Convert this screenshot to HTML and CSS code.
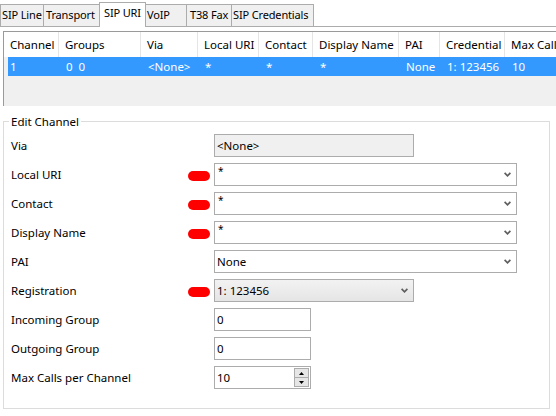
FILE: index.html
```html
<!DOCTYPE html>
<html>
<head>
<meta charset="utf-8">
<link rel="stylesheet" href="styles.css">
</head>
<body>
<div class="tabs">
  <div class="tab w-line">SIP Line</div>
  <div class="tab w-transport">Transport</div>
  <div class="tab active w-uri">SIP URI</div>
  <div class="tab w-voip">VoIP</div>
  <div class="tab w-fax">T38 Fax</div>
  <div class="tab w-cred">SIP Credentials</div>
</div>
<div class="page">
  <div class="list">
    <div class="list-head">
      <div class="hc">Channel</div>
      <div class="hc">Groups</div>
      <div class="hc">Via</div>
      <div class="hc">Local URI</div>
      <div class="hc">Contact</div>
      <div class="hc">Display Name</div>
      <div class="hc">PAI</div>
      <div class="hc">Credential</div>
      <div class="hc last">Max Calls</div>
    </div>
    <div class="list-row selected">
      <div class="rc first">1</div>
      <div class="rc">0&nbsp;&nbsp;0</div>
      <div class="rc">&lt;None&gt;</div>
      <div class="rc">*</div>
      <div class="rc">*</div>
      <div class="rc">*</div>
      <div class="rc">None</div>
      <div class="rc">1: 123456</div>
      <div class="rc">10</div>
    </div>
  </div>

  <fieldset class="group">
    <legend>Edit Channel</legend>
    <div class="row">
      <div class="label"><span>Via</span></div>
      <div class="box readonly w200">&lt;None&gt;</div>
    </div>
    <div class="row">
      <div class="label"><span>Local URI</span><span class="pill"></span></div>
      <div class="box combo w303"><span class="star">*</span><svg class="chev" width="7" height="5" viewBox="0 0 7 5"><polyline points="0.6,0.8 3.5,3.8 6.4,0.8" fill="none" stroke="#5f5f5f" stroke-width="1.7"/></svg></div>
    </div>
    <div class="row">
      <div class="label"><span>Contact</span><span class="pill"></span></div>
      <div class="box combo w303"><span class="star">*</span><svg class="chev" width="7" height="5" viewBox="0 0 7 5"><polyline points="0.6,0.8 3.5,3.8 6.4,0.8" fill="none" stroke="#5f5f5f" stroke-width="1.7"/></svg></div>
    </div>
    <div class="row">
      <div class="label"><span>Display Name</span><span class="pill"></span></div>
      <div class="box combo w303"><span class="star">*</span><svg class="chev" width="7" height="5" viewBox="0 0 7 5"><polyline points="0.6,0.8 3.5,3.8 6.4,0.8" fill="none" stroke="#5f5f5f" stroke-width="1.7"/></svg></div>
    </div>
    <div class="row">
      <div class="label"><span>PAI</span></div>
      <div class="box combo w303"><span>None</span><svg class="chev" width="7" height="5" viewBox="0 0 7 5"><polyline points="0.6,0.8 3.5,3.8 6.4,0.8" fill="none" stroke="#5f5f5f" stroke-width="1.7"/></svg></div>
    </div>
    <div class="row">
      <div class="label"><span>Registration</span><span class="pill"></span></div>
      <div class="box combo button w200"><span>1: 123456</span><svg class="chev" width="7" height="5" viewBox="0 0 7 5"><polyline points="0.6,0.8 3.5,3.8 6.4,0.8" fill="none" stroke="#5f5f5f" stroke-width="1.7"/></svg></div>
    </div>
    <div class="row">
      <div class="label"><span>Incoming Group</span></div>
      <div class="box w97">0</div>
    </div>
    <div class="row">
      <div class="label"><span>Outgoing Group</span></div>
      <div class="box w97">0</div>
    </div>
    <div class="row">
      <div class="label"><span>Max Calls per Channel</span></div>
      <div class="box spinbox w97"><span>10</span>
        <div class="spin">
          <div class="sb"><svg width="5" height="3" viewBox="0 0 5 3"><polygon points="2.5,0 5,3 0,3" fill="#000"/></svg></div>
          <div class="sb"><svg width="5" height="3" viewBox="0 0 5 3"><polygon points="0,0 5,0 2.5,3" fill="#000"/></svg></div>
        </div>
      </div>
    </div>
  </fieldset>
</div>
</body>
</html>
```
FILE: styles.css
```css
html, body {
  margin: 0;
  padding: 0;
}
body {
  width: 556px;
  height: 416px;
  overflow: hidden;
  background: #ffffff;
  font-family: "Noto Sans", "Open Sans", sans-serif;
  font-size: 11.5px;
  color: #000;
}

.tabs {
  display: flex;
  align-items: flex-end;
  height: 26px;
  border-bottom: 1px solid #acacac;
  background: #ffffff;
}
.tab {
  box-sizing: border-box;
  height: 22px;
  border: 1px solid #acacac;
  border-bottom: none;
  background: #f0f0f0;
  padding-left: 1px;
  font-size: 11px;
  letter-spacing: -0.15px;
  line-height: 20px;
  white-space: nowrap;
  overflow: hidden;
  margin-left: -1px;
}
.tab:first-child { margin-left: 0; }
.tab.active {
  height: 25px;
  background: #ffffff;
  margin-bottom: -1px;
  position: relative;
  z-index: 1;
  line-height: 20px;
  padding-left: 4px;
  padding-bottom: 3px;
}
.w-line { width: 44px; }
.w-transport { width: 57px; padding-left: 2px; }
.w-uri { width: 47px; }
.w-voip { width: 42px; }
.w-fax { width: 46px; padding-left: 3px; }
.w-cred { width: 83px; }

.page {
  padding: 4px 0 0 3px;
}
.list {
  height: 74px;
  border-left: 1px solid #9a9a9a;
  border-top: 1px solid #9a9a9a;
  background: #f0f0f0;
  overflow: hidden;
}
.list-head, .list-row {
  display: grid;
  grid-template-columns: 55px 82px 57px 61px 54px 86px 41px 65px 60px;
}
.list-head {
  height: 25px;
  background: #ffffff;
}
.hc {
  border-right: 1px solid #e5e5e5;
  padding-left: 6px;
  line-height: 25px;
  white-space: nowrap;
  overflow: hidden;
}
.hc.last { border-right: none; }
.list-row {
  height: 19px;
  line-height: 19px;
  margin-left: 4px;
  grid-template-columns: 51px 82px 57px 61px 54px 86px 41px 65px 60px;
}
.list-row.selected {
  background: #3399ff;
  color: #ffffff;
}
.rc {
  padding-left: 7px;
  white-space: nowrap;
}
.rc.first { padding-left: 2px; }

.group {
  margin: 8px 0 0 0;
  width: 547px;
  box-sizing: border-box;
  border: 1px solid #dcdcdc;
  padding: 5px 0 19px 7px;
}
.group legend {
  margin-left: -2px;
  padding: 0 2px;
  line-height: 15px;
}
.row {
  display: flex;
  align-items: center;
  height: 23px;
  margin-bottom: 6px;
}
.row:last-child { margin-bottom: 0; }
.label {
  width: 203px;
  display: flex;
  align-items: center;
  justify-content: space-between;
  white-space: nowrap;
  padding-bottom: 1px;
}
.pill {
  width: 22px;
  height: 10px;
  border-radius: 5px;
  background: #ff0000;
  margin-right: 4px;
  margin-top: 4px;
}
.box {
  box-sizing: border-box;
  height: 23px;
  border: 1px solid #acacac;
  background: #ffffff;
  padding-left: 2px;
  display: flex;
  align-items: center;
  white-space: nowrap;
}
.readonly { background: #f0f0f0; }
.w200 { width: 200px; }
.w303 { width: 303px; }
.w97 { width: 97px; }
.combo {
  justify-content: space-between;
  padding-right: 5px;
}
.combo.button {
  background: linear-gradient(#f2f2f2, #e5e5e5);
}
.star {
  align-self: flex-start;
  font-size: 10px;
  line-height: 12px;
  padding-top: 1px;
  padding-left: 1px;
}
.chev { display: block; }
.spinbox {
  justify-content: space-between;
  padding-right: 1px;
}
.spin {
  display: flex;
  flex-direction: column;
}
.sb {
  box-sizing: border-box;
  width: 15px;
  height: 10px;
  border: 1px solid #acacac;
  background: #e6e6e6;
  display: flex;
  align-items: center;
  justify-content: center;
}
.sb + .sb { margin-top: -1px; }
.sb svg { display: block; }
```
